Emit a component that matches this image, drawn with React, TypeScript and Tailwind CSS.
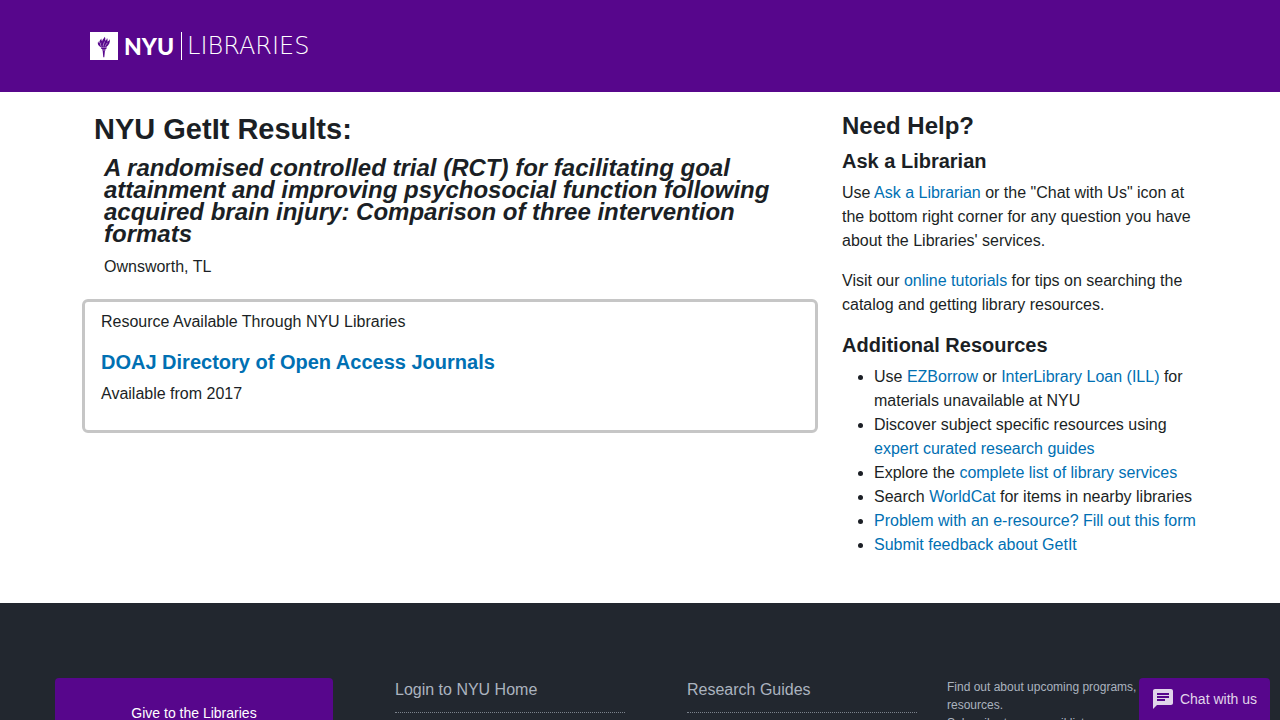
import type { ReactNode } from 'react';
import { MdChat } from 'react-icons/md';

function TextLink({ children }: { children: ReactNode }) {
  return (
    <a href="#" className="text-[#0070b3] hover:underline">
      {children}
    </a>
  );
}

function TorchMark() {
  return (
    <svg viewBox="0 0 28 28" className="size-7" aria-hidden="true">
      <rect width="28" height="28" fill="#fff" />
      <g fill="#57068c">
        <path d="M11.300 15.200C8.500 14.100 7.100 12 8.200 9.200c.2 1.100.7 1.700 1.200 2-.3-2.400 1-3.500 2-4.700-.1 1.500.3 2.200.7 2.900.2-2.100 2-2.500 2.600-4.600.9 1.500.6 2.700.4 4 .9-.7 1.800-1.400 1.900-2.800.8 1.300.7 2.500.3 3.800 1.200-.6 1.900-1.500 2.300-2.800.9 3.100-.5 6.200-3.600 8.200z" />
        <path d="M10.700 15.500h6.300l-.8 1.400h-4.700zM12 17.300h3.700l-.5 1.500h-2.700zM12.700 19.100h2.200l-.6 6.100h-1z" />
      </g>
      <path d="M11.600 14.500c-1.300-1.200-1.300-2.200-.7-3.800M13.300 14.500c-.5-2 1-3.200 1.200-4.900M15.200 14.500c0-1.600 1.400-2.100 2-3.700" fill="none" stroke="#fff" strokeWidth=".5" />
    </svg>
  );
}

function Header() {
  return (
    <header className="bg-[#57068c] pt-8 pb-8">
      <div className="mx-auto max-w-[1140px] px-5">
        <a href="#" aria-label="NYU Libraries" className="flex h-7 w-fit items-center text-white">
          <TorchMark />
          <span className="ml-1.5 font-[Lato] text-[23px] leading-7 font-black">NYU</span>
          <span className="ml-[7px] h-7 w-px bg-white" />
          <span className="ml-[5px] font-['DejaVu_Sans','DejaVu_Sans_Light',sans-serif] text-2xl leading-7 font-extralight">
            LIBRARIES
          </span>
        </a>
      </div>
    </header>
  );
}

function Help() {
  return (
    <aside className="w-1/3 px-3 pt-5">
      <h2 className="mb-[9px] text-2xl leading-7 font-bold">Need Help?</h2>
      <h3 className="mb-2 text-xl leading-6 font-bold">Ask a Librarian</h3>
      <p className="mb-4">
        Use <TextLink>Ask a Librarian</TextLink> or the "Chat with Us" icon at the bottom right corner for any
        question you have about the Libraries' services.
      </p>
      <p className="mb-4">
        Visit our <TextLink>online tutorials</TextLink> for tips on searching the catalog and getting library
        resources.
      </p>
      <h3 className="mb-2 text-xl leading-6 font-bold">Additional Resources</h3>
      <ul className="list-disc pl-8">
        <li>
          Use <TextLink>EZBorrow</TextLink> or <TextLink>InterLibrary Loan (ILL)</TextLink> for materials
          unavailable at NYU
        </li>
        <li>
          Discover subject specific resources using <TextLink>expert curated research guides</TextLink>
        </li>
        <li>
          Explore the <TextLink>complete list of library services</TextLink>
        </li>
        <li>
          Search <TextLink>WorldCat</TextLink> for items in nearby libraries
        </li>
        <li>
          <TextLink>Problem with an e-resource? Fill out this form</TextLink>
        </li>
        <li>
          <TextLink>Submit feedback about GetIt</TextLink>
        </li>
      </ul>
    </aside>
  );
}

function Footer() {
  return (
    <footer className="flex min-h-0 flex-1 items-start overflow-hidden bg-[#22272f] px-[55px] pt-[75px] text-[#abb3bf]">
      <a
        href="#"
        className="w-[278px] shrink-0 rounded-sm bg-[#57068c] py-[23px] text-center text-sm leading-6 text-white"
      >
        Give to the Libraries
      </a>
      <a href="#" className="ml-[62px] flex-1 border-b border-dotted border-[#7b828c] pb-2.5">
        Login to NYU Home
      </a>
      <a href="#" className="ml-[62px] flex-1 border-b border-dotted border-[#7b828c] pb-2.5">
        Research Guides
      </a>
      <div className="ml-[30px] w-[278px] shrink-0 text-xs leading-[18px]">
        <p>Find out about upcoming programs, events, and resources.</p>
        <p>Subscribe to our email list.</p>
      </div>
    </footer>
  );
}

export default function App() {
  return (
    <div className="flex h-screen flex-col overflow-hidden bg-white font-['Liberation_Sans',Arial,sans-serif] text-base leading-6 text-[#1b1f25]">
      <Header />
      <main className="mx-auto flex w-full max-w-[1140px] shrink-0 pb-[46px]">
        <div className="w-2/3 px-3 pt-5">
          <div className="px-3">
            <h1 className="mb-2 text-[29px] leading-[35px] font-bold">NYU GetIt Results:</h1>
            <div className="px-2.5 pt-0.5">
              <h2 className="mb-2.5 text-2xl leading-[22px] font-bold italic">
                A randomised controlled trial (RCT) for facilitating goal attainment and improving psychosocial
                function following acquired brain injury: Comparison of three intervention formats
              </h2>
              <p>Ownsworth, TL</p>
            </div>
          </div>
          <section className="mt-5 rounded-md border-3 border-[#c6c6c6] px-4 pt-2 pb-6">
            <p>Resource Available Through NYU Libraries</p>
            <h3 className="mt-4 mb-2 text-xl leading-6 font-bold">
              <TextLink>DOAJ Directory of Open Access Journals</TextLink>
            </h3>
            <p>Available from 2017</p>
          </section>
        </div>
        <Help />
      </main>
      <Footer />
      <button
        type="button"
        className="fixed right-2.5 bottom-0 flex h-[42px] items-center gap-[5px] rounded-t-sm bg-[#57068c] pr-[13px] pl-3 text-sm text-[#e1d5ea]"
      >
        <MdChat className="size-6" aria-hidden="true" />
        Chat with us
      </button>
    </div>
  );
}
